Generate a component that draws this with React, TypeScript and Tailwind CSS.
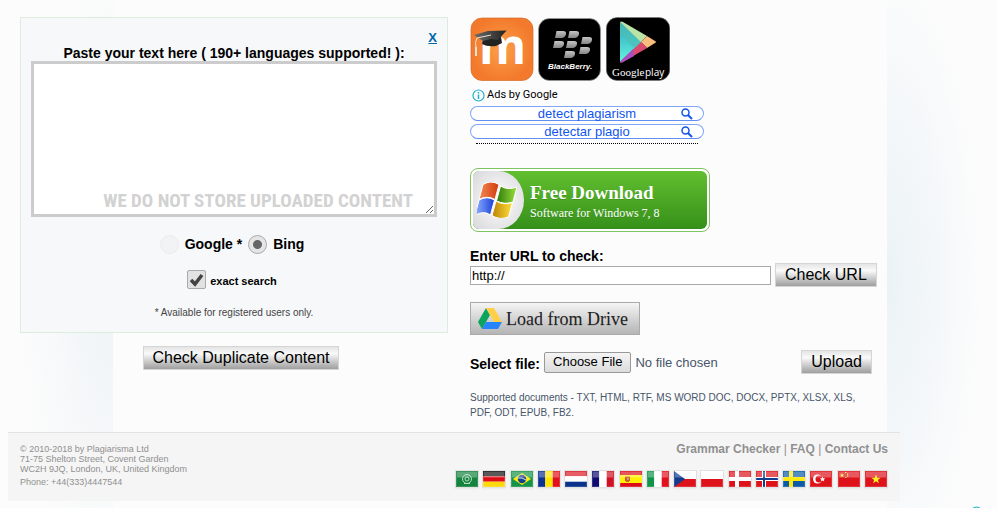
import { useState } from "react";
import type { ReactNode } from "react";

const FLAGS: { name: string; art: ReactNode }[] = [
  {
    name: "Arabic",
    art: (
      <>
        <path fill="#14833d" d="M0 0h22v16H0z" />
        <circle cx="11" cy="8" r="4.5" fill="none" stroke="#b5dcc0" />
        <circle cx="11" cy="8" r="2" fill="none" stroke="#b5dcc0" />
        <path d="M8 12.5h6" stroke="#b5dcc0" />
      </>
    ),
  },
  {
    name: "German",
    art: (
      <>
        <path fill="#111" d="M0 0h22v5.3H0z" />
        <path fill="#dd0c15" d="M0 5.3h22v5.4H0z" />
        <path fill="#ffd80b" d="M0 10.7h22V16H0z" />
      </>
    ),
  },
  {
    name: "Portuguese",
    art: (
      <>
        <path fill="#159447" d="M0 0h22v16H0z" />
        <path fill="#fdea14" d="M11 2l9 6-9 6-9-6z" />
        <circle cx="11" cy="8" r="4.2" fill="#17408b" />
        <path d="M7 7q4-1 8 2" fill="none" stroke="#d5e6ee" />
      </>
    ),
  },
  {
    name: "Romanian",
    art: (
      <>
        <path fill="#0b3191" d="M0 0h7.3v16H0z" />
        <path fill="#ffe500" d="M7.3 0h7.4v16H7.3z" />
        <path fill="#e2101d" d="M14.7 0H22v16h-7.3z" />
      </>
    ),
  },
  {
    name: "Dutch",
    art: (
      <>
        <path fill="#dc1722" d="M0 0h22v5.3H0z" />
        <path fill="#fff" d="M0 5.3h22v5.4H0z" />
        <path fill="#08328b" d="M0 10.7h22V16H0z" />
      </>
    ),
  },
  {
    name: "French",
    art: (
      <>
        <path fill="#100b70" d="M0 0h7.3v16H0z" />
        <path fill="#fff" d="M7.3 0h7.4v16H7.3z" />
        <path fill="#cf1025" d="M14.7 0H22v16h-7.3z" />
      </>
    ),
  },
  {
    name: "Spanish",
    art: (
      <>
        <path fill="#dc0d18" d="M0 0h22v16H0z" />
        <path fill="#fff000" d="M0 4h22v8H0z" />
        <path fill="#d35b22" d="M5 5.5h5v4L8.5 11h-2L5 9.500z" />
        <path fill="#b3a09a" d="M7 7h2v2H7z" />
      </>
    ),
  },
  {
    name: "Italian",
    art: (
      <>
        <path fill="#119447" d="M0 0h7.3v16H0z" />
        <path fill="#fff" d="M7.3 0h7.4v16H7.3z" />
        <path fill="#e2101d" d="M14.7 0H22v16h-7.3z" />
      </>
    ),
  },
  {
    name: "Czech",
    art: (
      <>
        <path fill="#fff" d="M0 0h22v8H0z" />
        <path fill="#dd121b" d="M0 8h22v8H0z" />
        <path fill="#123a8d" d="M0 0l11 8-11 8z" />
      </>
    ),
  },
  {
    name: "Polish",
    art: (
      <>
        <path fill="#fff" d="M0 0h22v8H0z" />
        <path fill="#dd121b" d="M0 8h22v8H0z" />
      </>
    ),
  },
  {
    name: "Danish",
    art: (
      <>
        <path fill="#dd121b" d="M0 0h22v16H0z" />
        <path fill="#fff" d="M6 0h4v16H6zM0 6h22v4H0z" />
      </>
    ),
  },
  {
    name: "Norwegian",
    art: (
      <>
        <path fill="#dd121b" d="M0 0h22v16H0z" />
        <path fill="#fff" d="M6 0h4v16H6zM0 6h22v4H0z" />
        <path fill="#143b8c" d="M7 0h2v16H7zM0 7h22v2H0z" />
      </>
    ),
  },
  {
    name: "Swedish",
    art: (
      <>
        <path fill="#095aa9" d="M0 0h22v16H0z" />
        <path fill="#ffe90d" d="M6 0h4v16H6zM0 6h22v4H0z" />
      </>
    ),
  },
  {
    name: "Turkish",
    art: (
      <>
        <path fill="#dd121b" d="M0 0h22v16H0z" />
        <circle cx="7.5" cy="8" r="4.5" fill="#fff" />
        <circle cx="9" cy="8" r="3.5" fill="#dd121b" />
        <path fill="#fff" d="M12.500 5.500l.8 1.800 2 .2-1.500 1.200.4 1.900-1.700-1-1.600 1 .4-1.900-1.400-1.200 1.900-.2z" />
      </>
    ),
  },
  {
    name: "Chinese",
    art: (
      <>
        <path fill="#dd121b" d="M0 0h22v16H0z" />
        <path fill="#ffe52a" d="M4 2l.6 1.500H6L5 4.600l.4 1.600L4 5.200 2.600 6.200 3 4.600 2 3.500h1.400zM7 1h1.400v1H7zM9 2.500h1.200v1.200H9zM9 4.500h1.200v1.200H9zM7.200 6h1.300v1H7.200z" />
      </>
    ),
  },
  {
    name: "Vietnamese",
    art: (
      <>
        <path fill="#dd121b" d="M0 0h22v16H0z" />
        <path fill="#fff21d" d="M11 3.500l1.200 3.300h3.500l-2.800 2.100 1 3.400-2.900-2-2.900 2 1-3.400-2.800-2.100h3.500z" />
      </>
    ),
  },
];

function MoodleIcon() {
  return (
    <svg viewBox="0 0 63 64" className="h-16 w-[63px] overflow-visible" aria-hidden="true">
      <defs>
        <radialGradient id="moodle">
          <stop offset="0" stopColor="#fba04b" />
          <stop offset="1" stopColor="#f37a2c" />
        </radialGradient>
        <linearGradient id="cap" x1="0" x2="1">
          <stop offset="0" stopColor="#6b6b69" />
          <stop offset="1" stopColor="#222" />
        </linearGradient>
      </defs>
      <rect x="1" y="1" width="62" height="62.5" rx="11" fill="url(#moodle)" stroke="#d66c27" strokeWidth=".7" />
      <text x="9" y="47" fontSize="48" fontWeight="700" fontFamily="Open Sans, sans-serif" fill="#fff">
        m
      </text>
      <path fill="#222" d="M13 22l-1 5q5 3 14 2l6-3-1-6z" />
      <path fill="url(#cap)" d="M4 18l14-4 18.500-.5L28 23l-7-1-8 2z" />
      <path d="M21 18L7 21q-2.500 5-1 9v9" fill="none" stroke="#eee2d6" strokeWidth="1" />
      <path d="M6 30v9" stroke="#eee2d6" strokeWidth="2" />
    </svg>
  );
}

const BERRY_DOTS = [
  [17, 14],
  [30, 14],
  [15, 24],
  [28, 24],
  [43, 20],
  [41, 30],
  [26, 34],
];

function BlackBerryIcon() {
  return (
    <svg viewBox="0 0 63 64" className="h-16 w-[63px]" aria-hidden="true">
      <defs>
        <linearGradient id="berry" x2="0" y2="1">
          <stop offset="0" stopColor="#c5c5c5" />
          <stop offset="1" stopColor="#858585" />
        </linearGradient>
      </defs>
      <rect x=".5" y="1.5" width="62" height="62" rx="11" fill="#000" stroke="#999" strokeWidth=".7" />
      {BERRY_DOTS.map(([x, y]) => (
        <path
          key={`${x}-${y}`}
          transform={`translate(${x} ${y})`}
          d="M1.500 0H8q3.500 0 3 3T7 7H0z"
          fill="url(#berry)"
        />
      ))}
      <text x="10" y="52" fontSize="8" fontWeight="700" fontStyle="italic" fontFamily="Liberation Sans, sans-serif" fill="#fff">
        BlackBerry.
      </text>
    </svg>
  );
}

function GooglePlayIcon() {
  return (
    <svg viewBox="0 0 64 64" className="size-16" aria-hidden="true">
      <defs>
        <linearGradient id="play" x2="0" y2="1">
          <stop offset="0" stopColor="#2ba3c2" />
          <stop offset="1" stopColor="#65f4dd" />
        </linearGradient>
      </defs>
      <rect x=".3" y=".5" width="63.5" height="63" rx="11" fill="#000" stroke="#777" strokeWidth=".6" />
      <path fill="url(#play)" d="M14 5v40l22-20z" />
      <path fill="#4dbfb7" d="M14 5l22 20-8 6-14-14z" opacity=".7" />
      <path fill="#b9e4a5" d="M14 5q1-1 3 0l24 14-6 6z" />
      <path fill="#f9bd7e" d="M41 19l8 5q2 1 0 2l-8 5-6-6z" />
      <path fill="#db4b70" d="M35 25l6 6-24 14q-2 1-3 0z" />
      <path fill="#a94fc0" d="M27 32l1 7-11 6q-2 1-3 0z" />
      <text x="6" y="59" fontSize="11" fontFamily="Liberation Serif, serif" fill="#fff">
        Google
      </text>
      <text x="39" y="59" fontSize="10" fontFamily="Open Sans, sans-serif" fill="#fff">
        play
      </text>
    </svg>
  );
}

function WindowsLogo() {
  return (
    <svg viewBox="0 0 40 36" className="h-9 w-10" aria-hidden="true">
      <defs>
        <linearGradient id="winRed">
          <stop offset="0" stopColor="#f28a53" />
          <stop offset="1" stopColor="#d23a0c" />
        </linearGradient>
        <linearGradient id="winGreen">
          <stop offset="0" stopColor="#2f7a09" />
          <stop offset="1" stopColor="#9be03c" />
        </linearGradient>
        <linearGradient id="winBlue">
          <stop offset="0" stopColor="#8fb2ff" />
          <stop offset="1" stopColor="#1c3fd8" />
        </linearGradient>
        <linearGradient id="winYellow">
          <stop offset="0" stopColor="#bd8204" />
          <stop offset="1" stopColor="#ffe03a" />
        </linearGradient>
      </defs>
      <g stroke="#fff" strokeWidth="1">
        <path fill="url(#winRed)" d="M6 2.500q8-5 16 0l-4 15q-8-4.500-16 0z" />
        <path fill="url(#winGreen)" d="M23.500 4q7 4.500 16.500 1l-4 15q-8 3-16.500-1z" />
        <path fill="url(#winBlue)" d="M2 18q8-4.500 15.500 0l-4 15q-7-5-15.500 .5z" />
        <path fill="url(#winYellow)" d="M19 19q7 4.500 16.500 1.500l-4 14.500q-9 3.500-16.500-1.500z" />
      </g>
    </svg>
  );
}

function DriveLogo() {
  return (
    <svg viewBox="0 0 24 21" className="h-[21px] w-6" aria-hidden="true">
      <path fill="#0da55d" d="M8 0l4 7-8 14-4-7z" />
      <path fill="#ffcf48" d="M8 0h8l8 14h-8z" />
      <path fill="#2684fc" d="M8 14h16l-4 7H4z" />
    </svg>
  );
}

function InfoIcon() {
  return (
    <svg viewBox="0 0 13 13" className="size-[13px]" fill="none" stroke="#1bb0d0" aria-hidden="true">
      <circle cx="6.5" cy="6.5" r="5.5" strokeWidth="1.2" />
      <path d="M6.500 5.500v4.500M6.500 3v1.500" strokeWidth="1.500" />
    </svg>
  );
}

const BUTTON =
  "h-6 border border-[#d5d5d5] bg-linear-to-b from-[#e4e4e4] via-[#fafafa] via-30% to-[#9f9f9f] px-[9px] text-base leading-5 text-black";

function AdLink({ children }: { children: ReactNode }) {
  return (
    <a
      href="#"
      className="grid h-[15px] grid-cols-[1fr_auto_1fr] items-center rounded-lg border border-[#7fa6f8] border-b-[#5f8ff0] bg-white px-2.5 text-[13px] leading-[13px] text-[#1155ee]"
    >
      <span className="col-start-2">{children}</span>
      <svg viewBox="0 0 12 12" className="size-3 justify-self-end" fill="none" stroke="#1155ee" aria-hidden="true">
        <circle cx="4.5" cy="4.5" r="3.5" strokeWidth="1.5" />
        <path d="M7 7l4 4" strokeWidth="2" />
      </svg>
    </a>
  );
}

function TextPanel() {
  const [text, setText] = useState("");
  const [engine, setEngine] = useState("bing");
  const [exact, setExact] = useState(true);

  return (
    <section className="flex flex-col border border-[#dcecdd] bg-[#f7f8fa] px-2.5 pt-3 pb-[11px]">
      <a href="#" className="self-end text-[13px] leading-[15px] font-bold text-[#0066aa] underline">
        X
      </a>
      <label htmlFor="source" className="text-center text-sm leading-4 font-bold text-black">
        Paste your text here ( 190+ languages supported! ):
      </label>
      <div className="relative flex">
        <textarea
          id="source"
          value={text}
          onChange={(e) => setText(e.target.value)}
          className="h-[156px] w-full resize border-3 border-[#ccc] bg-white p-1 text-sm outline-none"
        />
        <span className="pointer-events-none absolute right-6 bottom-1 font-['Roboto_Condensed',Roboto,sans-serif] text-[19px] leading-6 font-bold whitespace-nowrap text-[#d2d2d2]">
          WE DO NOT STORE UPLOADED CONTENT
        </span>
      </div>
      <div className="mt-[17px] flex items-center justify-center gap-1.5 pr-1 text-sm font-bold text-black">
        <input
          id="google"
          type="radio"
          name="engine"
          disabled
          checked={engine === "google"}
          onChange={() => setEngine("google")}
          className="size-[19px] appearance-none rounded-full border border-[#e9ebec] bg-[#f2f3f4]"
        />
        <label htmlFor="google">Google *</label>
        <input
          id="bing"
          type="radio"
          name="engine"
          checked={engine === "bing"}
          onChange={() => setEngine("bing")}
          className="size-[19px] appearance-none rounded-full border border-[#aaa] bg-[#e5e5e5] checked:bg-[radial-gradient(circle,#666_0_4px,#e5e5e5_5px)]"
        />
        <label htmlFor="bing">Bing</label>
      </div>
      <div className="mt-[15px] flex items-center justify-center gap-1 pr-1 text-[11px] font-bold text-black">
        <span className="relative flex">
          <input
            id="exact"
            type="checkbox"
            checked={exact}
            onChange={(e) => setExact(e.target.checked)}
            className="size-[19px] appearance-none rounded-xs border border-[#aaa] bg-[#e2e2e2]"
          />
          {exact && (
            <svg viewBox="0 0 19 19" className="pointer-events-none absolute inset-0 size-[19px]" aria-hidden="true">
              <path d="M4 10l4 4 7-9" fill="none" stroke="#444" strokeWidth="3.5" />
            </svg>
          )}
        </span>
        <label htmlFor="exact" className="pt-1">exact search</label>
      </div>
      <p className="mt-[15px] text-center text-[10px] leading-4 text-[#444]">* Available for registered users only.</p>
    </section>
  );
}

export default function App() {
  const [url, setUrl] = useState("http://");

  return (
    <div className="relative min-h-screen overflow-hidden bg-[#fcfcfc] bg-[linear-gradient(to_right,transparent_113px,#fcfcfc_113px,#fcfcfc_887px,transparent_887px),radial-gradient(96px_320px_at_113px_280px,#eef3f6,transparent),radial-gradient(96px_320px_at_887px_280px,#ebf2f6,transparent)] font-['Liberation_Sans',Arial,sans-serif] text-[#444]">
      <div className="ml-2 max-w-[892px]">
        <main className="grid grid-cols-[428fr_418fr] gap-[22px] px-3 pt-[17px] pb-3">
          <div className="flex flex-col gap-[13px]">
            <TextPanel />
            <div className="flex justify-center pl-3.5">
              <button className={BUTTON}>Check Duplicate Content</button>
            </div>
          </div>

          <div>
            <div className="flex gap-[5px]">
              <a href="#" aria-label="Moodle">
                <MoodleIcon />
              </a>
              <a href="#" aria-label="BlackBerry">
                <BlackBerryIcon />
              </a>
              <a href="#" aria-label="Google Play">
                <GooglePlayIcon />
              </a>
            </div>

            <div className="w-[234px] pt-[7px]">
              <p className="flex items-center gap-0.5 pl-0.5 font-[Roboto,sans-serif] text-[11px] leading-[14px] text-black">
                <InfoIcon />
                Ads by Google
              </p>
              <div className="mt-1 flex flex-col gap-[3px]">
                <AdLink>detect plagiarism</AdLink>
                <AdLink>detectar plagio</AdLink>
              </div>
              <div className="mx-1.5 mt-1 border-b border-dotted border-black" />
            </div>

            <a
              href="#"
              className="mt-6 flex h-16 w-60 rounded-lg border border-[#7fc461] bg-white p-0.5 font-['Liberation_Serif',serif] text-white"
            >
              <span className="flex flex-1 overflow-hidden rounded-md bg-linear-to-b from-[#61bf2f] to-[#35901a]">
                <span className="flex w-[51px] items-center rounded-r-[50%] bg-radial from-white to-[#d8d8dc] pl-1">
                  <WindowsLogo />
                </span>
                <span className="flex flex-col justify-center pt-0.5 pl-1.5 text-shadow-2xs">
                  <b className="text-[19px] leading-6">Free Download</b>
                  <span className="text-xs leading-4">Software for Windows 7, 8</span>
                </span>
              </span>
            </a>

            <div className="mt-[15px] flex items-end gap-1">
              <div className="flex w-[301px] flex-col">
                <label htmlFor="url" className="text-sm leading-[19px] font-bold text-black">
                  Enter URL to check:
                </label>
                <input
                  id="url"
                  value={url}
                  onChange={(e) => setUrl(e.target.value)}
                  className="mb-0.5 h-[19px] border border-[#a9a9a9] bg-white px-px text-[13px] text-black"
                />
              </div>
              <button className={BUTTON}>Check URL</button>
            </div>

            <button className="mt-[15px] flex h-[33px] items-center gap-1 border border-[#aaa] bg-linear-to-b from-[#f5f5f5] to-[#b5b5b5] pr-[11px] pl-[7px] font-['Liberation_Serif',serif] text-lg text-[#222] text-shadow-2xs">
              <DriveLogo />
              Load from Drive
            </button>

            <div className="mt-[15px] flex items-center pr-4">
              <label htmlFor="file" className="pt-1 text-sm font-bold text-black">
                Select file:
              </label>
              <input
                id="file"
                type="file"
                className="ml-1 min-w-0 flex-1 text-[13px] text-[#475569] file:mr-1 file:h-[21px] file:rounded-xs file:border file:border-solid file:border-[#999] file:bg-linear-to-b file:from-[#f5f5f5] file:to-[#dcdcdc] file:px-2 file:text-[13px] file:leading-4 file:text-black"
              />
              <button className={BUTTON}>Upload</button>
            </div>

            <p className="mt-4 max-w-[402px] text-[10px] leading-[15px] text-[#475569]">
              Supported documents - TXT, HTML, RTF, MS WORD DOC, DOCX, PPTX, XLSX, XLS, PDF, ODT, EPUB, FB2.
            </p>
          </div>
        </main>

        <footer className="flex justify-between border-t border-[#e3e3e3] bg-[#f5f5f5] px-3 pt-2 pb-[13px] text-[#909090]">
          <address className="pt-[3px] text-[9px] leading-[10px] not-italic">
            © 2010-2018 by Plagiarisma Ltd
            <br />
            71-75 Shelton Street, Covent Garden
            <br />
            WC2H 9JQ, London, UK, United Kingdom
            <p className="pt-[3px]">Phone: +44(333)4447544</p>
          </address>
          <div className="flex flex-col items-end">
            <nav className="text-xs leading-4">
              <a href="#" className="font-bold">Grammar Checker</a> | <a href="#" className="font-bold">FAQ</a> |{" "}
              <a href="#" className="font-bold">Contact Us</a>
            </nav>
            <div className="flex w-[433px] justify-between pt-[13px]">
              {FLAGS.map((flag) => (
                <a key={flag.name} href="#" aria-label={flag.name} className="border border-[#e2e2e2] bg-white shadow-xs">
                  <svg viewBox="0 0 22 16" className="h-4 w-[22px]" aria-hidden="true">
                    {flag.art}
                    <path fill="#fff" opacity=".3" d="M1 1h20v5.500H1z" />
                    <path fill="none" stroke="#fff" opacity=".15" d="M.5.5h21v15H.5z" />
                  </svg>
                </a>
              ))}
            </div>
          </div>
        </footer>
      </div>
      <span className="absolute right-3.5 -bottom-[11px]">
        <InfoIcon />
      </span>
    </div>
  );
}
